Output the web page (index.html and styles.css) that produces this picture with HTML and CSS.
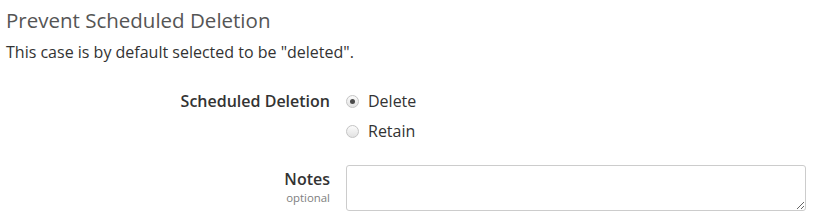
FILE: index.html
```html
<!DOCTYPE html>
<html>
<head>
<meta charset="utf-8">
<link rel="stylesheet" href="styles.css">
</head>
<body>
<div class="page">
  <h2 class="title">Prevent Scheduled Deletion</h2>
  <p class="desc">This case is by default selected to be "deleted".</p>
  <div class="form">
    <div class="row">
      <div class="label"><span class="label-main">Scheduled Deletion</span></div>
      <div class="field radios">
        <label class="radio"><span class="dot checked"></span><span>Delete</span></label>
        <label class="radio"><span class="dot"></span><span>Retain</span></label>
      </div>
    </div>
    <div class="row notes-row">
      <div class="label notes-label"><span class="label-main">Notes</span><span class="label-sub">optional</span></div>
      <div class="field"><textarea class="notes"></textarea></div>
    </div>
  </div>
</div>
</body>
</html>
```

FILE: styles.css
```css
html, body {
  margin: 0;
  padding: 0;
  background: #fff;
}
body {
  font-family: "Open Sans", "Liberation Sans", sans-serif;
  color: #333;
  font-size: 16px;
}
.page {
  padding: 6px 10px 0 6px;
}
.title {
  margin: 0;
  font-size: 20.5px;
  font-weight: 400;
  color: #555;
  line-height: 28px;
}
.desc {
  margin: 7px 0 0 0;
  line-height: 22px;
  color: #333;
}
.form {
  margin-top: 27px;
}
.row {
  display: flex;
  gap: 16px;
}
.label {
  width: 324px;
  text-align: right;
  display: flex;
  flex-direction: column;
  align-items: flex-end;
}
.label-main {
  font-weight: 600;
  line-height: 22px;
  color: #333;
}
.notes-label {
  padding-top: 3px;
}
.label-sub {
  font-size: 11.4px;
  color: #808080;
  line-height: 14px;
  margin-top: 1px;
}
.radios {
  display: flex;
  flex-direction: column;
  gap: 8px;
}
.radio {
  display: flex;
  align-items: center;
  height: 22px;
  gap: 9px;
  color: #333;
}
.dot {
  width: 11px;
  height: 11px;
  border-radius: 50%;
  border: 1px solid #c4c4c4;
  background: linear-gradient(#fbfbfb, #e2e2e2);
  position: relative;
  box-sizing: content-box;
}
.dot.checked::after {
  content: "";
  position: absolute;
  left: 3px;
  top: 3px;
  width: 5px;
  height: 5px;
  border-radius: 50%;
  background: #4a4a4a;
}
.notes-row {
  margin-top: 23px;
}
.notes {
  display: block;
  width: 460px;
  height: 46px;
  box-sizing: border-box;
  border: 1px solid #ccc;
  border-radius: 3px;
  margin: 0;
  padding: 6px;
  font-family: inherit;
  resize: vertical;
}
```
